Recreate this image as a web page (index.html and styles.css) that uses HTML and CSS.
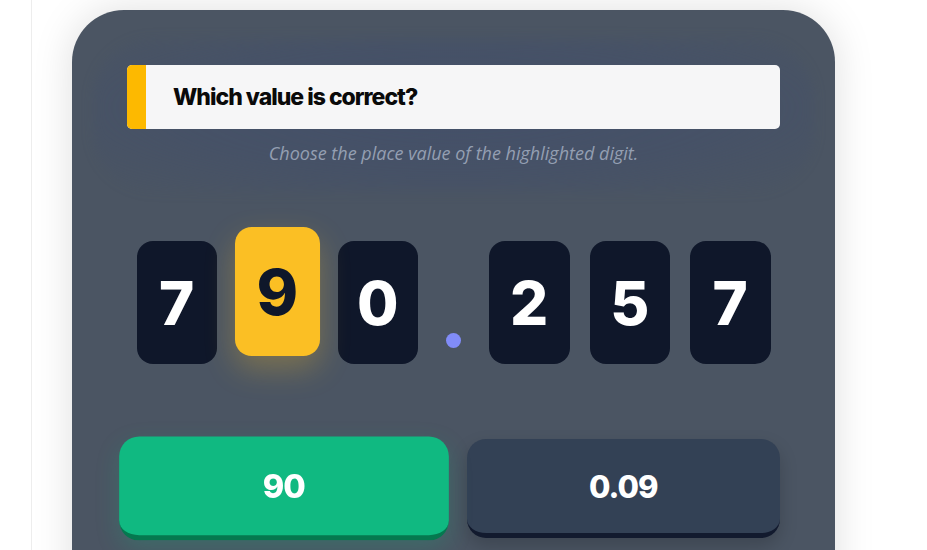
FILE: index.html
```html
<!DOCTYPE html>
<html lang="en">
<head>
<meta charset="utf-8">
<title>Place value quiz</title>
<link rel="stylesheet" href="styles.css">
</head>
<body>
<div class="page">
  <main class="card">
    <section class="prompt">
      <div class="question">
        <span class="question-bar"></span>
        <h1 class="question-text">Which value is correct?</h1>
      </div>
      <p class="hint">Choose the place value of the highlighted digit.</p>
    </section>

    <div class="digits">
      <div class="tile">7</div>
      <div class="tile tile-active">9</div>
      <div class="tile">0</div>
      <div class="point"><span class="point-dot"></span></div>
      <div class="tile">2</div>
      <div class="tile">5</div>
      <div class="tile">7</div>
    </div>

    <div class="answers">
      <button class="answer answer-correct">90</button>
      <button class="answer">0.09</button>
    </div>
  </main>
</div>
</body>
</html>
```

FILE: styles.css
```css
* { box-sizing: border-box; }

html, body {
  margin: 0;
  height: 100%;
  background: #ffffff;
  overflow: hidden;
}

body {
  font-family: "Inter", "Lato", sans-serif;
}

.page {
  margin-left: 31px;
  width: 845px;
  min-height: 100%;
  border-left: 1px solid #ededed;
  padding: 10px 41px 0 40px;
}

.card {
  width: 763px;
  min-height: 700px;
  background: #4b5563;
  border-radius: 52px;
  padding: 55px 55px 40px;
  box-shadow: 0 0 40px rgba(0, 0, 0, 0.13);
}

.prompt {
  position: relative;
}

.prompt::before {
  content: "";
  position: absolute;
  left: -34px;
  right: -34px;
  top: -26px;
  bottom: -26px;
  border-radius: 60px;
  background: radial-gradient(ellipse at 50% 45%, rgba(62, 76, 110, 0.55) 0%, rgba(62, 76, 110, 0.35) 55%, rgba(62, 76, 110, 0) 100%);
  filter: blur(6px);
}

.question {
  position: relative;
  display: flex;
  align-items: center;
  height: 64px;
  background: #f6f6f7;
  border-radius: 5px;
  overflow: hidden;
}

.question-bar {
  align-self: stretch;
  width: 19px;
  background: #fdb900;
}

.question-text {
  margin: 0 0 0 27px;
  font-family: "Inter", sans-serif;
  font-weight: 800;
  font-size: 23px;
  letter-spacing: -1px;
  color: #0a0a0a;
}

.hint {
  position: relative;
  margin: 11px 0 0;
  text-align: center;
  font-family: "Open Sans", sans-serif;
  font-style: italic;
  font-size: 18px;
  line-height: 26px;
  color: #949fb2;
}

.digits {
  display: flex;
  justify-content: center;
  gap: 20px;
  margin-top: 75px;
  height: 123px;
}

.tile {
  width: 80.5px;
  height: 123px;
  border-radius: 16px;
  background: #0f172a;
  color: #ffffff;
  display: flex;
  align-items: center;
  justify-content: center;
  font-family: "Inter", sans-serif;
  font-weight: 800;
  font-size: 60px;
  line-height: 1;
}

.tile-active {
  background: #fbbf24;
  color: #0f172a;
  transform: translateY(-11px) scale(1.05);
  box-shadow: 0 12px 28px rgba(251, 191, 36, 0.28);
}

.point {
  width: 31px;
  display: flex;
  align-items: flex-end;
  justify-content: center;
  padding-bottom: 16px;
}

.point-dot {
  width: 15px;
  height: 15px;
  border-radius: 50%;
  background: #818cf8;
}

.answers {
  display: grid;
  grid-template-columns: 1fr 1fr;
  gap: 26px;
  margin-top: 75px;
}

.answer {
  height: 99px;
  border: none;
  border-bottom: 5px solid #121a2e;
  border-radius: 19px;
  background: #334155;
  color: #ffffff;
  font-family: "Inter", sans-serif;
  font-weight: 800;
  font-size: 31px;
  letter-spacing: -1px;
  box-shadow: 0 8px 18px rgba(0, 0, 0, 0.18);
  padding: 0;
}

.answer-correct {
  background: #10b981;
  border-bottom-color: #05784f;
  transform: scale(1.05);
  box-shadow: 0 8px 22px rgba(16, 185, 129, 0.22);
}
```
